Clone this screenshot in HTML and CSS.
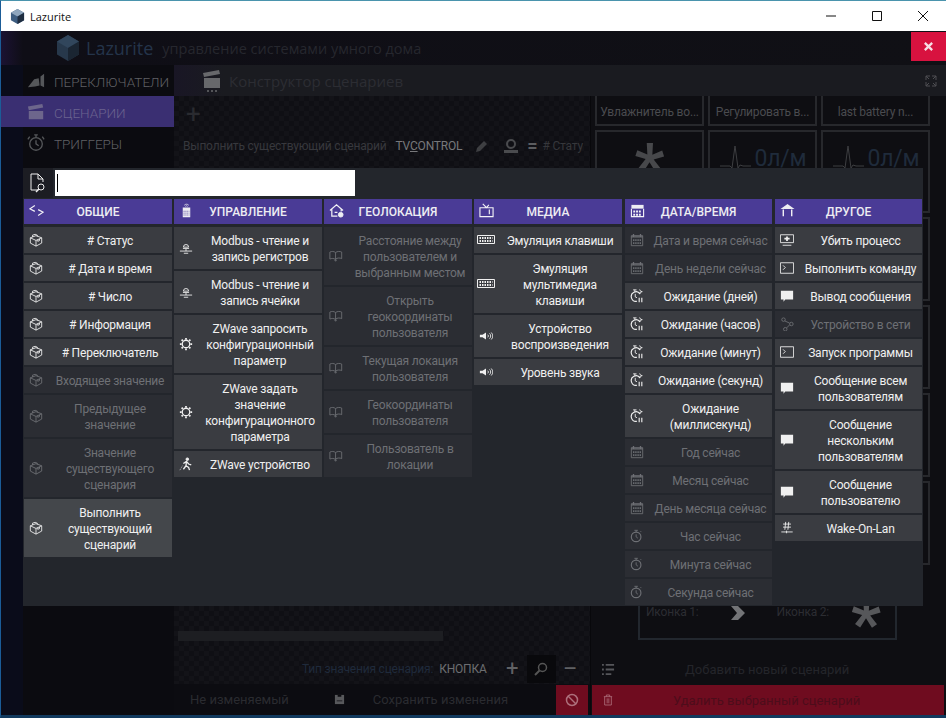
FILE: index.html
```html
<!DOCTYPE html>
<html lang="ru">
<head>
    <meta charset="UTF-8">
    <meta name="viewport" content="width=device-width, initial-scale=1.0">
    <title>Lazurite</title>
    <link rel="stylesheet" href="styles.css">
</head>
<body>
    <svg class="defs" aria-hidden="true">
        <symbol id="i-cube" viewBox="0 0 16 16"><path d="M1.500 5.500 8 3l6.500 2.500v6L8 15l-6.500-3.500zM1.500 5.500 8 8.500l6.500-3M8 8.500V15M4 4.500V2.500l3-1 2.500 1v1.500M10 7.500v2l2 -.8v-2"/></symbol>
        <symbol id="i-modbus" viewBox="0 0 16 16"><path d="M5 7a3 3 0 1 1 6 0zM4.500 8.500h7M8 9v2.500M1 11.500h14M5.500 14h5"/></symbol>
        <symbol id="i-gear" viewBox="0 0 16 16"><circle cx="8" cy="8" r="4.300" stroke-width="1.500"/><path stroke-width="2" d="M8 1v2M8 13v2M1 8h2M13 8h2M3 3l1.400 1.400M11.600 11.600 13 13M13 3l-1.400 1.400M4.400 11.600 3 13"/></symbol>
        <symbol id="i-walker" viewBox="0 0 16 16"><circle cx="9.500" cy="2.500" r="1.500" fill="currentColor"/><path stroke-width="1.500" d="M5 7.500 8.500 5l2.500 3 3 1M8.500 5 8 10l3 2 1 3M8 10l-3 4"/><path stroke-dasharray="1 1.500" d="M1 15l3-5"/></symbol>
        <symbol id="i-map" viewBox="0 0 16 16"><path d="M1 3.500c2-1 4.500-1 6.500.5v8c-2-1.500-4.500-1.500-6.500-.5zM7.500 4c2-1.500 5-1.500 7-.5v7.500c-2-1-5-1-7 .5M7.500 14l-1-1.500h2z"/></symbol>
        <symbol id="i-keys" viewBox="0 0 18 12"><path d="M.5 1.500h17v8H.5z"/><path stroke-width="2" stroke-dasharray="1.500 1" d="M2.500 4h13M2.500 7h13"/></symbol>
        <symbol id="i-sound" viewBox="0 0 16 16"><path fill="currentColor" stroke="none" d="M1 6.500h3L8 4v8L4 9.500H1z"/><path d="M10 6.500a2 2 0 0 1 0 3M12 5a4 4 0 0 1 0 6M14 4a6 6 0 0 1 0 8"/></symbol>
        <symbol id="i-date" viewBox="0 0 16 16"><path d="M1.500 3h13v11.500h-13z"/><path stroke-width="1.500" d="M1.500 4.500h13M4 1v3M12 1v3"/><path stroke-dasharray="1.500 1" stroke-width="2" d="M3.500 8h9M3.500 11.500h9"/></symbol>
        <symbol id="i-timer" viewBox="0 0 16 16"><circle cx="7" cy="9" r="5.500" stroke-width="1.300"/><path d="M7 1.500v2M5 1.500h4M7 6v3l2 1.500M12 2.500l1 1"/></symbol>
        <symbol id="i-wait" viewBox="0 0 16 16"><path stroke-width="1.300" d="M11.500 5.500A5.500 5.500 0 1 0 8 14"/><path d="M5.500 .8v2.500M3.500 1h4M6 5.500v3.500l2 1M11 .5 12 2.500l2 .5-2 .8-1 2-.8-2"/><path stroke-width="1.300" d="M10.500 10v5M13.500 10v5"/></symbol>
        <symbol id="i-chat" viewBox="0 0 16 16"><path fill="currentColor" stroke="none" d="M1 2h14v10H6l-2 2.500V12H1z"/></symbol>
        <symbol id="i-term" viewBox="0 0 16 16"><path d="M.5 2h15v12H.5zM3.500 5 6 7.500 3.500 10"/></symbol>
        <symbol id="i-kill" viewBox="0 0 16 16"><path d="M.5 2h15v9H.5zM3 14h10"/><path stroke-width="2" d="M5 6.500h6M8 4v5"/></symbol>
        <symbol id="i-net" viewBox="0 0 16 16"><circle cx="4" cy="3" r="2"/><circle cx="13" cy="8" r="2"/><circle cx="6" cy="14" r="2"/><path d="M5.500 4.500 11 7M11 9l-3.500 3.500"/></symbol>
        <symbol id="i-wake" viewBox="0 0 16 16"><path d="M6.500 1 5.500 10M10 1 9 10M3.500 3.500h9M3.500 7h9M1.500 12.500h13M7.500 11v3"/></symbol>
        <symbol id="i-code" viewBox="0 0 18 14"><path stroke-width="1.500" d="M7 1 1 5l6 3M11 6l6 3-6 4"/></symbol>
        <symbol id="i-remote" viewBox="0 0 16 20"><path fill="currentColor" stroke="none" d="M3 6h10v13H3z"/><path d="M5 3a4 4 0 0 1 6 0M6.500 4.500a2 2 0 0 1 3 0"/><path stroke="#4a3b96" stroke-dasharray="1.500 1" d="M4 11h8M4 13.500h8M4 16h8"/></symbol>
        <symbol id="i-home" viewBox="0 0 16 16"><path stroke-width="1.300" d="M1 8l7-6 7 6M3 6.500V14h6M13 6.500V9M6 10h3"/><circle cx="12.500" cy="12.500" r="2.500" fill="currentColor"/></symbol>
        <symbol id="i-tv" viewBox="0 0 16 16"><path stroke-width="1.200" d="M1 5h14v9.500H1zM4 1l4 4 2.500-3M11 7v5"/></symbol>
        <symbol id="i-cal" viewBox="0 0 16 16"><path fill="currentColor" stroke="none" d="M1.500 2h13v4h-13z"/><path stroke-width="1.200" d="M1.500 6v8.500h13V6"/><path stroke-width="2" stroke-dasharray="2 1" d="M3.500 9h9M3.500 12.500h9"/></symbol>
        <symbol id="i-gazebo" viewBox="0 0 16 16"><path fill="currentColor" stroke="none" d="M8 1l7.500 5.500H.5z"/><path stroke-width="1.500" d="M3.500 7v7M12.500 7v7"/></symbol>
    </svg>

    <div class="window">
        <div class="titlebar">
            <svg class="win_logo" viewBox="0 0 16 16"><path fill="#3d5d80" d="M8 0l7 4v8l-7 4-7-4V4z"/><path fill="#8fa6bd" d="M8 0l7 4-7 4-7-4z"/><path fill="#1e2d40" d="M8 8l7-4v8l-7 4z"/></svg>
            <span class="win_title">Lazurite</span>
            <div class="win_btns">
                <span class="win_btn"><svg viewBox="0 0 12 12"><path d="M1 6h10"/></svg></span>
                <span class="win_btn"><svg viewBox="0 0 12 12"><path d="M1.500 1.500h9v9h-9z"/></svg></span>
                <span class="win_btn"><svg viewBox="0 0 12 12"><path d="M1 1l10 10M11 1 1 11"/></svg></span>
            </div>
        </div>

        <div class="app_head">
            <svg class="app_logo" viewBox="0 0 24 26"><path fill="#27384b" d="M12 0l11 6.500v13L12 26 1 19.500v-13z"/><path fill="#31465c" d="M12 0l11 6.500L12 13 1 6.500z"/><path fill="#1a2532" d="M12 13l11-6.500v13L12 26z"/></svg>
            <span class="app_name">Lazurite</span>
            <span class="app_sub">управление системами умного дома</span>
            <span class="app_close">
                <svg viewBox="0 0 12 12"><path d="M2 2l8 8M10 2 2 10"/></svg>
            </span>
        </div>

        <div class="app_body">
            <div class="sidebar">
                <div class="side_item">
                    <svg viewBox="0 0 20 18" fill="#55575a"><path d="M1 16 8 7l5-1 1 8-5 1zM15 4l4-3v15l-4-2z"/></svg>
                    ПЕРЕКЛЮЧАТЕЛИ
                </div>
                <div class="side_item active">
                    <svg viewBox="0 0 20 18" fill="#6d668c"><path d="M2 8h16v9H2zM1 3l16-3 1 4-16 3z"/></svg>
                    СЦЕНАРИИ
                </div>
                <div class="side_item">
                    <svg viewBox="0 0 20 20" fill="none" stroke="#55575a" stroke-width="1.500"><circle cx="10" cy="11" r="7"/><path d="M8 1h4M10 1v3M10 7v4l3 2M3 3 1 6M17 3l2 3"/></svg>
                    ТРИГГЕРЫ
                </div>
            </div>

            <div class="content">
                <div class="tabbar">
                    <svg class="tab_icon" viewBox="0 0 20 24" fill="#67686b"><path d="M2 9h16v10H2zM1 4l16-3 1 4L2 8z"/><circle cx="6" cy="22" r="1"/><circle cx="10" cy="22" r="1"/><circle cx="14" cy="22" r="1"/></svg>
                    <span class="tab_title">Конструктор сценариев</span>
                    <svg class="tab_expand" viewBox="0 0 12 12"><path d="M1 5V1h4M7 1h4v4M11 7v4H7M5 11H1V7M1 1l3 3M11 1 8 4M11 11 8 8M1 11l3-3"/></svg>
                </div>

                <div class="workspace">
                    <div class="editor">
                        <div class="plus_row">+</div>
                        <div class="action_row">
                            <span class="action_name">Выполнить существующий сценарий</span>
                            <span class="action_value">TV<u>C</u>ONTROL</span>
                            <svg class="action_pen" viewBox="0 0 14 14"><path d="M1 13l1-4 7-7 3 3-7 7z"/></svg>
                            <svg class="action_run" viewBox="0 0 16 16"><circle cx="8" cy="6" r="4" fill="none" stroke="#4a4b4e" stroke-width="2"/><path d="M1 12h14v3H1z"/></svg>
                            <span class="action_eq">=</span>
                            <span class="action_arg"># Стату</span>
                        </div>
                        <div class="scroll_track"></div>
                        <div class="type_row">
                            <span class="type_label">Тип значения сценария:</span>
                            <span class="type_value">КНОПКА</span>
                            <span class="type_btn">+</span>
                            <span class="type_btn dark"><svg viewBox="0 0 14 14"><circle cx="8.500" cy="5.500" r="4"/><path stroke-width="2" d="M5.500 8.500 1 13"/></svg></span>
                            <span class="type_btn">–</span>
                        </div>
                        <div class="save_row">
                            <span class="lock_text">Не изменяемый</span>
                            <svg class="save_icon" viewBox="0 0 12 12"><path d="M1 1h10v10H1z"/><path fill="#0c0c11" d="M4 1h4v2H4zM3 7h6v1H3z"/></svg>
                            <span class="save_text">Сохранить изменения</span>
                            <span class="forbid_btn"><svg viewBox="0 0 14 14"><circle cx="7" cy="7" r="5.500"/><path d="M3 3l8 8"/></svg></span>
                        </div>
                    </div>

                    <div class="scenarios">
                        <div class="tiles">
                            <div class="tile name">Увлажнитель во...</div>
                            <div class="tile name">Регулировать в...</div>
                            <div class="tile name">last battery n...</div>
                            <div class="tile star">*</div>
                            <div class="tile pulse"><svg viewBox="0 0 34 26"><path d="M1 21h10l2 2 3-22 3 22 2-3 3 1h8"/></svg><span>0л/м</span></div>
                            <div class="tile pulse"><svg viewBox="0 0 34 26"><path d="M1 21h10l2 2 3-22 3 22 2-3 3 1h8"/></svg><span>0л/м</span></div>
                            <div class="tile"></div><div class="tile"></div><div class="tile"></div>
                            <div class="tile"></div><div class="tile"></div><div class="tile"></div>
                            <div class="tile"></div><div class="tile"></div><div class="tile"></div>
                            <div class="tile"></div><div class="tile"></div><div class="tile"></div>
                        </div>
                        <div class="icon_frame">
                            <span class="frame_label">Иконка 1:</span>
                            <svg class="frame_arrow" viewBox="0 0 16 16"><path d="M1 1h7l7 7-7 7H1l6-7z"/></svg>
                            <span class="frame_label">Иконка 2:</span>
                            <span class="frame_star">*</span>
                        </div>
                        <div class="add_row">
                            <svg viewBox="0 0 16 14"><path stroke-dasharray="2 1" stroke-width="2" d="M1 2h2M1 7h2M1 12h2"/><path stroke-width="2" d="M5 2h9M5 7h9M5 12h6"/></svg>
                            <span>Добавить новый сценарий</span>
                        </div>
                        <div class="delete_row">
                            <svg viewBox="0 0 12 14"><path d="M1 3h10M4 3V1h4v2M2 3v10h8V3M5 5v6M7 5v6"/></svg>
                            <span>Удалить выбранный сценарий</span>
                        </div>
                    </div>
                </div>
            </div>
        </div>

        <div class="picker">
            <div class="picker_search">
                <span class="search_icon">
                    <svg viewBox="0 0 16 20"><path d="M8 17H1V1h7l5 5v3M8 1v5h5"/><circle cx="11" cy="14" r="3"/><path stroke-width="1.500" d="M9 16l-3 3"/></svg>
                </span>
                <div class="search_input"><span class="caret"></span></div>
            </div>

            <div class="picker_cols">
                <div class="col">
                    <div class="col_head"><svg><use href="#i-code"/></svg><span>ОБЩИЕ</span></div>
                    <div class="item"><svg><use href="#i-cube"/></svg><span># Статус</span></div>
                    <div class="item"><svg><use href="#i-cube"/></svg><span># Дата и время</span></div>
                    <div class="item"><svg><use href="#i-cube"/></svg><span># Число</span></div>
                    <div class="item"><svg><use href="#i-cube"/></svg><span># Информация</span></div>
                    <div class="item"><svg><use href="#i-cube"/></svg><span># Переключатель</span></div>
                    <div class="item off"><svg><use href="#i-cube"/></svg><span>Входящее значение</span></div>
                    <div class="item off"><svg><use href="#i-cube"/></svg><span>Предыдущее значение</span></div>
                    <div class="item off"><svg><use href="#i-cube"/></svg><span>Значение существующего сценария</span></div>
                    <div class="item hover"><svg><use href="#i-cube"/></svg><span>Выполнить существующий сценарий</span></div>
                </div>
                <div class="col">
                    <div class="col_head"><svg><use href="#i-remote"/></svg><span>УПРАВЛЕНИЕ</span></div>
                    <div class="item"><svg><use href="#i-modbus"/></svg><span>Modbus - чтение и запись регистров</span></div>
                    <div class="item"><svg><use href="#i-modbus"/></svg><span>Modbus - чтение и запись ячейки</span></div>
                    <div class="item"><svg><use href="#i-gear"/></svg><span>ZWave запросить конфигурационный параметр</span></div>
                    <div class="item"><svg><use href="#i-gear"/></svg><span>ZWave задать значение конфигурационного параметра</span></div>
                    <div class="item"><svg><use href="#i-walker"/></svg><span>ZWave устройство</span></div>
                </div>
                <div class="col">
                    <div class="col_head"><svg><use href="#i-home"/></svg><span>ГЕОЛОКАЦИЯ</span></div>
                    <div class="item off"><svg><use href="#i-map"/></svg><span>Расстояние между пользователем и выбранным местом</span></div>
                    <div class="item off"><svg><use href="#i-map"/></svg><span>Открыть геокоординаты пользователя</span></div>
                    <div class="item off"><svg><use href="#i-map"/></svg><span>Текущая локация пользователя</span></div>
                    <div class="item off"><svg><use href="#i-map"/></svg><span>Геокоординаты пользователя</span></div>
                    <div class="item off"><svg><use href="#i-map"/></svg><span>Пользователь в локации</span></div>
                </div>
                <div class="col">
                    <div class="col_head"><svg><use href="#i-tv"/></svg><span>МЕДИА</span></div>
                    <div class="item"><svg class="wide"><use href="#i-keys"/></svg><span>Эмуляция клавиши</span></div>
                    <div class="item"><svg class="wide"><use href="#i-keys"/></svg><span>Эмуляция мультимедиа клавиши</span></div>
                    <div class="item"><svg><use href="#i-sound"/></svg><span>Устройство воспроизведения</span></div>
                    <div class="item"><svg><use href="#i-sound"/></svg><span>Уровень звука</span></div>
                </div>
                <div class="col">
                    <div class="col_head"><svg><use href="#i-cal"/></svg><span>ДАТА/ВРЕМЯ</span></div>
                    <div class="item off"><svg><use href="#i-date"/></svg><span>Дата и время сейчас</span></div>
                    <div class="item off"><svg><use href="#i-date"/></svg><span>День недели сейчас</span></div>
                    <div class="item"><svg><use href="#i-wait"/></svg><span>Ожидание (дней)</span></div>
                    <div class="item"><svg><use href="#i-wait"/></svg><span>Ожидание (часов)</span></div>
                    <div class="item"><svg><use href="#i-wait"/></svg><span>Ожидание (минут)</span></div>
                    <div class="item"><svg><use href="#i-wait"/></svg><span>Ожидание (секунд)</span></div>
                    <div class="item"><svg><use href="#i-wait"/></svg><span>Ожидание (миллисекунд)</span></div>
                    <div class="item off"><svg><use href="#i-date"/></svg><span>Год сейчас</span></div>
                    <div class="item off"><svg><use href="#i-date"/></svg><span>Месяц сейчас</span></div>
                    <div class="item off"><svg><use href="#i-date"/></svg><span>День месяца сейчас</span></div>
                    <div class="item off"><svg><use href="#i-timer"/></svg><span>Час сейчас</span></div>
                    <div class="item off"><svg><use href="#i-timer"/></svg><span>Минута сейчас</span></div>
                    <div class="item off"><svg><use href="#i-timer"/></svg><span>Секунда сейчас</span></div>
                </div>
                <div class="col">
                    <div class="col_head"><svg><use href="#i-gazebo"/></svg><span>ДРУГОЕ</span></div>
                    <div class="item"><svg><use href="#i-kill"/></svg><span>Убить процесс</span></div>
                    <div class="item"><svg><use href="#i-term"/></svg><span>Выполнить команду</span></div>
                    <div class="item"><svg><use href="#i-chat"/></svg><span>Вывод сообщения</span></div>
                    <div class="item off"><svg><use href="#i-net"/></svg><span>Устройство в сети</span></div>
                    <div class="item"><svg><use href="#i-term"/></svg><span>Запуск программы</span></div>
                    <div class="item"><svg><use href="#i-chat"/></svg><span>Сообщение всем пользователям</span></div>
                    <div class="item"><svg><use href="#i-chat"/></svg><span>Сообщение нескольким пользователям</span></div>
                    <div class="item"><svg><use href="#i-chat"/></svg><span>Сообщение пользователю</span></div>
                    <div class="item"><svg><use href="#i-wake"/></svg><span>Wake-On-Lan</span></div>
                </div>
            </div>
        </div>
    </div>
</body>
</html>
```

FILE: styles.css
```css
* {
    margin: 0;
    padding: 0;
    box-sizing: border-box;
}

body {
    width: 946px;
    height: 718px;
    overflow: hidden;
    font-family: Roboto, sans-serif;
    font-size: 12px;
    letter-spacing: -.2px;
    background: #0c0c11;
}

.defs {
    position: absolute;
    width: 0;
    height: 0;
}

.window {
    position: relative;
    display: flex;
    flex-direction: column;
    width: 946px;
    height: 718px;
    border-top: 1px solid #4a94ad;
    border-left: 1px solid #1b5c97;
    border-bottom: 3px solid #123a5e;
    background: #0c0c11;
}

/* title bar */
.titlebar {
    display: flex;
    align-items: center;
    flex: none;
    height: 30px;
    padding-left: 9px;
    background: #fff;
}

.win_logo {
    width: 15px;
    height: 15px;
}

.win_title {
    margin-left: 5px;
    font-family: "Open Sans", sans-serif;
    font-size: 11px;
    letter-spacing: 0;
    color: #111;
}

.win_btns {
    display: flex;
    margin-left: auto;
}

.win_btn {
    display: flex;
    align-items: center;
    justify-content: center;
    width: 46px;
    height: 30px;
}

.win_btn svg {
    width: 12px;
    height: 12px;
    fill: none;
    stroke: #111;
    stroke-width: 1;
}

/* app header */
.app_head {
    display: flex;
    align-items: center;
    flex: none;
    height: 34px;
    padding-left: 55px;
    font-family: "Open Sans", sans-serif;
    letter-spacing: 0;
    background: linear-gradient(90deg, #1b1233 0, #0f0e16 22px, #101015 100%);
}

.app_logo {
    width: 24px;
    height: 26px;
}

.app_name {
    margin-left: 6px;
    font-size: 18px;
    color: #24344a;
}

.app_sub {
    margin-left: 9px;
    font-size: 14.500px;
    color: #26272e;
}

.app_close {
    display: flex;
    align-items: center;
    justify-content: center;
    width: 35px;
    height: 29px;
    margin-left: auto;
    margin-top: -4px;
    background: #d8123f;
}

.app_close svg {
    width: 11px;
    height: 11px;
    fill: none;
    stroke: #f6dfe5;
    stroke-width: 2.500;
}

.app_body {
    display: flex;
    flex: 1;
    min-height: 0;
}

/* sidebar */
.sidebar {
    flex: none;
    width: 173px;
    background: linear-gradient(90deg, #0a0c1a 0, #0a0c1a 22px, #0b0b10 22px);
}

.side_item {
    display: flex;
    align-items: center;
    gap: 9px;
    height: 31px;
    padding: 3px 0 0 26px;
    font-size: 13.500px;
    font-weight: 300;
    letter-spacing: 0;
    color: #606165;
}

.side_item svg {
    flex: none;
    width: 18px;
    height: 18px;
    margin-top: -3px;
}

.side_item.active {
    background: #3a2f72;
    color: #6b638f;
}

/* background content */
.content {
    display: flex;
    flex-direction: column;
    flex: 1;
    min-width: 0;
}

.tabbar {
    display: flex;
    align-items: center;
    flex: none;
    height: 31px;
    padding-left: 28px;
    background: linear-gradient(90deg, #191625 0, #1a1b20 50px);
}

.tab_icon {
    width: 20px;
    height: 24px;
}

.tab_title {
    margin-left: 7px;
    font-family: "Open Sans", sans-serif;
    font-size: 15px;
    letter-spacing: 0;
    color: #2c2d33;
}

.tab_expand {
    width: 12px;
    height: 12px;
    margin-left: auto;
    margin-right: 9px;
    fill: none;
    stroke: #4e4f53;
}

.workspace {
    display: flex;
    flex: 1;
    min-height: 0;
}

.editor {
    display: flex;
    flex-direction: column;
    flex: none;
    width: 416px;
    background-color: #101015;
    background-image: repeating-conic-gradient(#131318 0 25%, #0f0f14 0 50%);
    background-size: 10px 10px;
}

.plus_row {
    height: 36px;
    padding-left: 12px;
    font-size: 26px;
    line-height: 36px;
    color: #2a2b30;
}

.action_row {
    display: flex;
    align-items: center;
    height: 28px;
    padding-left: 9px;
    white-space: nowrap;
}

.action_name {
    color: #37383d;
}

.action_value {
    margin-left: 9px;
    color: #77787b;
}

.action_pen {
    width: 14px;
    height: 14px;
    margin-left: 13px;
    fill: #3e3f42;
}

.action_run {
    width: 16px;
    height: 16px;
    margin-left: 14px;
    fill: #4a4b4e;
}

.action_eq {
    margin-left: 8px;
    font-size: 18px;
    font-weight: 700;
    color: #5c5d60;
}

.action_arg {
    margin-left: 5px;
    color: #36373b;
}

.scroll_track {
    width: 265px;
    height: 10px;
    margin: 471px 0 0 4px;
    background: #1d1e22;
}

.type_row {
    display: flex;
    align-items: center;
    height: 30px;
    margin-top: 14px;
    padding-left: 128px;
    white-space: nowrap;
}

.type_label {
    color: #1f2a3b;
}

.type_value {
    margin-left: 6px;
    color: #6c6d70;
}

.type_btn {
    display: flex;
    align-items: center;
    justify-content: center;
    width: 29px;
    height: 28px;
    font-size: 22px;
    line-height: 1;
    color: #606164;
}

.type_btn:nth-of-type(3) {
    margin-left: 11px;
}

.type_btn.dark {
    background: #09090c;
}

.type_btn svg {
    width: 14px;
    height: 14px;
    fill: none;
    stroke: #555;
    stroke-width: 1.500;
}

.save_row {
    display: flex;
    align-items: center;
    height: 31px;
    padding-left: 16px;
    font-size: 13px;
    letter-spacing: 0;
    color: #2a2b30;
    background: #0c0c11;
}

.save_icon {
    width: 11px;
    height: 11px;
    margin-left: 45px;
    fill: #58595c;
}

.save_text {
    margin-left: 28px;
}

.forbid_btn {
    display: flex;
    align-items: center;
    justify-content: center;
    width: 32px;
    height: 30px;
    margin-left: auto;
    margin-right: 2px;
    background: #6f0c1f;
}

.forbid_btn svg {
    width: 14px;
    height: 14px;
    fill: none;
    stroke: #ad6f7b;
    stroke-width: 1.500;
}

.scenarios {
    display: flex;
    flex-direction: column;
    flex: 1;
    min-width: 0;
    border-left: 1px solid #08080b;
    background: #0e0e12;
}

.tiles {
    display: grid;
    grid-template-columns: repeat(3, 109px);
    grid-template-rows: 30px 83px repeat(4, 84px);
    gap: 4px;
    padding-left: 4px;
}

.tile {
    display: flex;
    align-items: center;
    justify-content: center;
    overflow: hidden;
    border: 2px solid #27282c;
}

.tile.name {
    padding-top: 3px;
    border-top: 0;
    white-space: nowrap;
    color: #4a4b4f;
}

.tile.star {
    align-items: flex-start;
    font-size: 66px;
    line-height: 74px;
    font-weight: 700;
    color: #47484b;
}

.tile.pulse {
    align-items: flex-start;
    padding-top: 13px;
    gap: 2px;
    font-size: 23px;
    color: #1f2b3b;
}

.tile.pulse svg {
    width: 34px;
    height: 26px;
    fill: none;
    stroke: #3d3e41;
}

.icon_frame {
    display: flex;
    align-items: flex-start;
    flex: none;
    width: 259px;
    height: 71px;
    margin: 4px 0 0 47px;
    padding: 34px 0 0 6px;
    border: 2px solid #22272e;
    color: #2c2d32;
}

.frame_label {
    flex: none;
}

.frame_arrow {
    width: 16px;
    height: 16px;
    margin: 0 31px;
    fill: #737477;
}

.frame_star {
    margin-left: 22px;
    font-size: 66px;
    line-height: 40px;
    font-weight: 700;
    color: #56575a;
}

.add_row {
    display: flex;
    align-items: center;
    flex: none;
    height: 30px;
    margin-top: 14px;
    padding-left: 10px;
    font-size: 13px;
    letter-spacing: 0;
    color: #24252a;
}

.add_row svg {
    width: 15px;
    height: 13px;
    margin-right: 69px;
    fill: none;
    stroke: #55565a;
}

.delete_row {
    display: flex;
    align-items: center;
    flex: none;
    height: 30px;
    margin: 1px 2px 0 1px;
    padding-left: 11px;
    font-size: 13px;
    letter-spacing: 0;
    color: #4d0d1b;
    background: #6f0c1f;
}

.delete_row svg {
    width: 10px;
    height: 12px;
    margin-right: 60px;
    fill: none;
    stroke: #ad6f7b;
}

/* picker dialog */
.picker {
    position: absolute;
    top: 167px;
    left: 22px;
    display: flex;
    flex-direction: column;
    width: 900px;
    height: 438px;
    padding-left: 1px;
    background: #23262c;
}

.picker_search {
    display: flex;
    flex: none;
    height: 31px;
    margin-left: -1px;
}

.search_icon {
    display: flex;
    align-items: center;
    justify-content: center;
    width: 30px;
    height: 30px;
    background: #1c1d23;
}

.search_icon svg {
    width: 16px;
    height: 20px;
    fill: none;
    stroke: #eee;
}

.search_input {
    display: flex;
    align-items: center;
    width: 300px;
    height: 26px;
    margin: 2px 0 0 2px;
    padding-left: 2px;
    background: #fff;
}

.caret {
    width: 1px;
    height: 18px;
    background: #000;
}

.picker_cols {
    display: grid;
    grid-template-columns: repeat(6, 148px);
    gap: 2px;
}

.col {
    display: flex;
    flex-direction: column;
    gap: 2px;
}

.col:nth-child(n+5) {
    margin-left: 1px;
}

.col_head {
    display: grid;
    grid-template-columns: 24px 1fr 24px;
    align-items: center;
    height: 25px;
    margin-bottom: 1px;
    padding-top: 1px;
    font-weight: 500;
    letter-spacing: 0;
    text-align: center;
    color: #ededf2;
    background: #4a3b96;
}

.col_head svg {
    justify-self: center;
    width: 15px;
    height: 15px;
    margin-top: -3px;
    fill: none;
    stroke: #f2f2f6;
    overflow: visible;
}

.item {
    display: flex;
    align-items: center;
    padding: 6px 0 4px;
    line-height: 16px;
    text-align: center;
    color: #f0f0f0;
    background: #3a3c41;
}

.item svg {
    flex: none;
    width: 14px;
    height: 14px;
    margin: -2px 5px 0;
    fill: none;
    stroke: #f0f0f0;
    stroke-width: 1;
    overflow: visible;
}

.item svg.wide {
    width: 18px;
    margin: -2px 3px 0;
}

.item span {
    flex: 1;
}

.item.off {
    color: #6e7075;
    background: #2b2d33;
}

.item.off svg {
    stroke: #6e7075;
}

.item.hover {
    background: #44474b;
}
```
